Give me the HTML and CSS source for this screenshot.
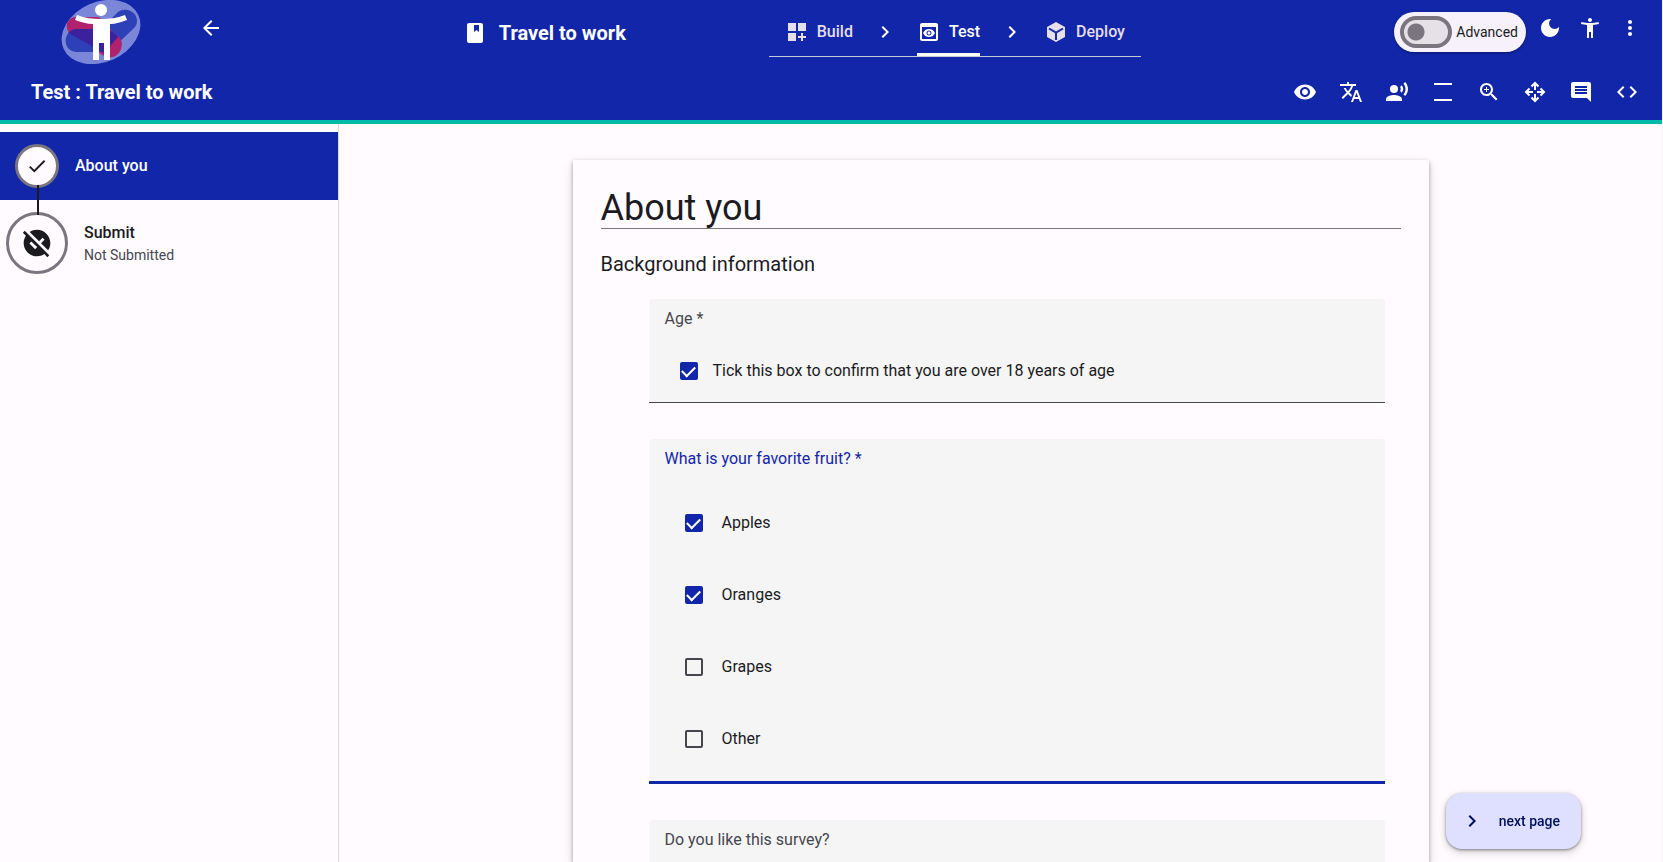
FILE: index.html
```html
<!DOCTYPE html>
<html lang="en">
<head>
<meta charset="utf-8">
<meta name="viewport" content="width=device-width, initial-scale=1">
<title>Test : Travel to work</title>
<link rel="stylesheet" href="styles.css">
</head>
<body>
<header class="header">
  <div class="topbar">
    <div class="brand">
      <svg class="logo" viewBox="0 0 84 66" aria-hidden="true">
        <ellipse cx="41" cy="32" rx="41" ry="30" transform="rotate(-24 41 32)" fill="#7a87d8"/>
        <path d="M58 12c7-5 19-1 19 9 0 4-2 6-5 9L51 50 40 30z" fill="#2d40b8"/>
        <path d="M17 17h22l16 17c7 3 8 10 6 15-3 8-10 10-17 7L14 36C3 31 5 17 17 17z" fill="#b0226e"/>
        <path d="M17 29h24c7 0 13 3 16 7L43 52H16C2 51 2 30 17 29z" fill="#2d40b8"/>
        <path d="M8 33c2-2 5-4 9-4h24c8 0 13 3 17 8L44 53 14 36z" fill="#3b229c"/>
        <circle cx="41" cy="10" r="6" fill="#fff"/>
        <path d="M17 15c8 3 16 4 24 4s16-1 24-4l2 5c-6 2-11 4-17 4v36h-6V43h-5v17h-6V24c-6 0-12-2-18-4z" fill="#fff"/>
      </svg>
      <button class="icon-button" type="button" aria-label="Back"><svg class="icon" viewBox="0 0 24 24"><path d="M20 11H7.83l5.59-5.59L12 4l-8 8 8 8 1.41-1.41L7.83 13H20v-2z"/></svg></button>
    </div>
    <div class="project">
      <svg class="icon" viewBox="0 0 24 24" aria-hidden="true"><path fill-rule="evenodd" d="M18 2H6c-1.100 0-2 .9-2 2v16c0 1.100.9 2 2 2h12c1.100 0 2-.9 2-2V4c0-1.100-.9-2-2-2zM11 4h5v7l-2.500-2L11 11z"/></svg>
      <span class="title">Travel to work</span>
    </div>
    <nav class="steps" aria-label="Stages">
      <a class="step" href="#build"><svg class="icon" viewBox="0 0 24 24"><path d="M3 3h8v8H3zM13 3h8v8h-8zM3 13h8v8H3zM18 13h-2v3h-3v2h3v3h2v-3h3v-2h-3z"/></svg>Build</a>
      <svg class="icon" viewBox="0 0 24 24" aria-hidden="true"><path d="M10 6L8.590 7.410 13.170 12l-4.580 4.590L10 18l6-6z"/></svg>
      <a class="step step-active" href="#test" aria-current="page"><svg class="icon" viewBox="0 0 24 24"><path d="M19 3H5c-1.110 0-2 .9-2 2v14c0 1.100.89 2 2 2h14c1.100 0 2-.9 2-2V5c0-1.100-.89-2-2-2zm0 16H5V7h14v12zm-5.500-6c0 .83-.67 1.500-1.500 1.500s-1.500-.67-1.500-1.500.67-1.500 1.500-1.500 1.500.67 1.500 1.500zM12 9c-2.730 0-5.060 1.660-6 4 .94 2.340 3.270 4 6 4s5.060-1.660 6-4c-.94-2.340-3.270-4-6-4zm0 6.500c-1.380 0-2.500-1.120-2.500-2.500s1.120-2.500 2.500-2.500 2.500 1.120 2.500 2.500-1.120 2.500-2.500 2.500z"/></svg>Test</a>
      <svg class="icon" viewBox="0 0 24 24" aria-hidden="true"><path d="M10 6L8.590 7.410 13.170 12l-4.580 4.590L10 18l6-6z"/></svg>
      <a class="step" href="#deploy"><svg class="icon" viewBox="0 0 24 24"><path d="M12 2l9 5v10l-9 5-9-5V7z"/><path class="cut" d="M5 8.500l7 4 7-4M12 12.500V20"/></svg>Deploy</a>
    </nav>
    <div class="tools">
      <label class="advanced"><input class="switch" type="checkbox" role="switch">Advanced</label>
      <button class="icon-button" type="button" aria-label="Dark mode"><svg class="icon" viewBox="0 0 24 24"><path d="M12 3c-4.970 0-9 4.030-9 9s4.030 9 9 9 9-4.030 9-9c0-.46-.04-.92-.1-1.360-.98 1.370-2.580 2.260-4.400 2.260-2.980 0-5.400-2.420-5.400-5.400 0-1.810.89-3.420 2.260-4.400-.44-.06-.9-.1-1.360-.1z"/></svg></button>
      <button class="icon-button" type="button" aria-label="Accessibility"><svg class="icon" viewBox="0 0 24 24"><path d="M20.500 6c-2.610.7-5.670 1-8.500 1s-5.890-.3-8.500-1L3 8c1.860.5 4 .83 6 1v13h2v-6h2v6h2V9c2-.17 4.140-.5 6-1l-.5-2zM12 6c1.100 0 2-.9 2-2s-.9-2-2-2-2 .9-2 2 .9 2 2 2z"/></svg></button>
      <button class="icon-button" type="button" aria-label="More"><svg class="icon" viewBox="0 0 24 24"><circle cx="12" cy="6" r="2"/><circle cx="12" cy="12" r="2"/><circle cx="12" cy="18" r="2"/></svg></button>
    </div>
  </div>
  <div class="subbar">
    <span class="title">Test : Travel to work</span>
    <div class="actions">
      <button class="icon-button" type="button" aria-label="Visibility"><svg class="icon" viewBox="0 0 24 24"><path d="M12 4.500C7 4.500 2.730 7.610 1 12c1.730 4.390 6 7.500 11 7.500s9.270-3.110 11-7.500c-1.730-4.390-6-7.500-11-7.500zM12 17c-2.760 0-5-2.240-5-5s2.240-5 5-5 5 2.240 5 5-2.240 5-5 5zm0-8c-1.660 0-3 1.340-3 3s1.340 3 3 3 3-1.340 3-3-1.340-3-3-3z"/></svg></button>
      <button class="icon-button" type="button" aria-label="Translate"><svg class="icon" viewBox="0 0 24 24"><path d="M12.870 15.070l-2.540-2.510.03-.03c1.740-1.940 2.980-4.170 3.710-6.530H17V4h-7V2H8v2H1v1.990h11.170C11.500 7.920 10.440 9.750 9 11.350 8.070 10.320 7.300 9.190 6.690 8h-2c.73 1.630 1.730 3.170 2.980 4.560l-5.090 5.020L4 19l5-5 3.110 3.110.76-2.040zM18.500 10h-2L12 22h2l1.120-3h4.750L21 22h2l-4.500-12zm-2.620 7l1.620-4.330L19.120 17h-3.240z"/></svg></button>
      <button class="icon-button" type="button" aria-label="Read aloud"><svg class="icon" viewBox="0 0 24 24"><circle cx="9" cy="9" r="4"/><path d="M9 15c-2.670 0-8 1.340-8 4v2h16v-2c0-2.660-5.330-4-8-4zm7.760-9.640l-1.680 1.690c.84 1.180.84 2.710 0 3.890l1.680 1.690c2.020-2.020 2.020-5.070 0-7.270zM20.070 2l-1.630 1.630c2.770 3.020 2.770 7.560 0 10.740L20.070 16c3.900-3.890 3.910-9.950 0-14z"/></svg></button>
      <button class="icon-button" type="button" aria-label="Line spacing"><svg class="icon" viewBox="0 0 24 24"><path d="M3 3h18v2H3zM3 19h18v2H3z"/></svg></button>
      <button class="icon-button" type="button" aria-label="Zoom in"><svg class="icon" viewBox="0 0 24 24"><path d="M15.500 14h-.79l-.28-.27C15.410 12.590 16 11.110 16 9.500 16 5.910 13.090 3 9.500 3S3 5.910 3 9.500 5.910 16 9.500 16c1.610 0 3.090-.59 4.230-1.570l.27.28v.79l5 4.990L20.490 19l-4.990-5zm-6 0C7.010 14 5 11.990 5 9.500S7.010 5 9.500 5 14 7.010 14 9.500 11.990 14 9.500 14z"/><path d="M12 10h-2v2H9v-2H7V9h2V7h1v2h2z"/></svg></button>
      <button class="icon-button" type="button" aria-label="Move"><svg class="icon icon-line" viewBox="0 0 24 24"><path d="M12 10V4M8.500 6.500L12 3l3.500 3.500M12 14v6M8.500 17.500L12 21l3.500-3.500M10 12H4M6.500 8.500L3 12l3.500 3.500M14 12h6M17.500 8.500L21 12l-3.500 3.500"/></svg></button>
      <button class="icon-button" type="button" aria-label="Comments"><svg class="icon" viewBox="0 0 24 24"><path d="M21.990 4c0-1.100-.89-2-1.990-2H4c-1.100 0-2 .9-2 2v12c0 1.100.9 2 2 2h14l4 4-.01-18zM18 14H6v-2h12v2zm0-3H6V9h12v2zm0-3H6V6h12v2z"/></svg></button>
      <button class="icon-button" type="button" aria-label="Code"><svg class="icon" viewBox="0 0 24 24"><path d="M9.400 16.600L4.800 12l4.600-4.600L8 6l-6 6 6 6 1.400-1.400zm5.200 0l4.600-4.600-4.600-4.600L16 6l6 6-6 6-1.400-1.400z"/></svg></button>
    </div>
  </div>
</header>
<div class="layout">
  <nav class="sidebar" aria-label="Pages">
    <a class="page page-current" href="#about" aria-current="page">
      <span class="badge"><svg class="icon" viewBox="0 0 24 24"><path d="M9 16.170L4.830 12l-1.420 1.410L9 19 21 7l-1.410-1.410z"/></svg></span>
      <span class="page-name">About you</span>
    </a>
    <a class="page page-submit" href="#submit">
      <span class="badge badge-large"><svg class="icon icon-large" viewBox="0 0 24 24"><path d="M21.190 21.190L2.810 2.810 1.390 4.220l2.270 2.270C2.610 8.070 2 9.960 2 12c0 5.520 4.480 10 10 10 2.040 0 3.930-.61 5.510-1.660l2.270 2.270 1.410-1.420zM10.590 16.600l-4.240-4.240 1.410-1.410 2.830 2.830.18-.18 1.410 1.410-1.590 1.590zM13.590 10.760l-7.100-7.100C8.070 2.610 9.960 2 12 2c5.520 0 10 4.480 10 10 0 2.040-.61 3.930-1.660 5.510l-5.340-5.340 2.650-2.650-1.410-1.410-2.650 2.650z"/></svg></span>
      <span class="page-text"><span class="page-name">Submit</span><span class="page-note">Not Submitted</span></span>
    </a>
  </nav>
  <main class="main">
    <form class="card">
      <h1 class="heading">About you</h1>
      <h2 class="subheading">Background information</h2>
      <fieldset class="field field-single">
        <legend class="legend">Age *</legend>
        <label class="option"><input class="check" type="checkbox" checked>Tick this box to confirm that you are over 18 years of age</label>
      </fieldset>
      <fieldset class="field field-active">
        <legend class="legend">What is your favorite fruit? *</legend>
        <label class="option"><input class="check" type="checkbox" checked>Apples</label>
        <label class="option"><input class="check" type="checkbox" checked>Oranges</label>
        <label class="option"><input class="check" type="checkbox">Grapes</label>
        <label class="option"><input class="check" type="checkbox">Other</label>
      </fieldset>
      <fieldset class="field">
        <legend class="legend">Do you like this survey?</legend>
      </fieldset>
    </form>
  </main>
</div>
<button class="next" type="button"><svg class="icon" viewBox="0 0 24 24"><path d="M10 6L8.590 7.410 13.170 12l-4.580 4.590L10 18l6-6z"/></svg>next page</button>
</body>
</html>
```
FILE: styles.css
```css
* {
  box-sizing: border-box;
}

body {
  display: flex;
  flex-direction: column;
  height: 100vh;
  margin: 0;
  overflow: hidden;
  border-right: 1px solid #f3f1f5;
  background: #fffbff;
  color: #1b1b1f;
  font-family: Roboto, "Liberation Sans", sans-serif;
  font-size: 16px;
  line-height: 24px;
}

a {
  color: inherit;
  text-decoration: none;
}

button {
  border: 0;
  background: none;
  color: inherit;
  font: inherit;
  cursor: pointer;
}

.icon {
  display: block;
  flex: none;
  width: 24px;
  height: 24px;
  fill: currentColor;
}

.icon-line {
  fill: none;
  stroke: currentColor;
  stroke-width: 2;
}

.icon-button {
  padding: 0;
}

.header {
  flex: none;
  border-bottom: 4px solid #00bba7;
  background: #1226aa;
  color: #fff;
}

.topbar {
  display: grid;
  grid-template-columns: 27% 320px auto 1fr;
  height: 64px;
}

.brand {
  display: flex;
  align-items: flex-start;
  gap: 55px;
  padding-left: 60px;
}

.brand .icon-button {
  margin-top: 16px;
}

.logo {
  width: 84px;
  height: 66px;
}

.project {
  display: flex;
  align-items: center;
  gap: 12px;
  padding-left: 14px;
}

.title {
  font-size: 20px;
  font-weight: 700;
}

.steps {
  display: flex;
  align-items: center;
  gap: 20px;
  height: 57px;
  padding: 7px 16px 0;
  border-bottom: 1px solid #c5c9d0;
}

.step {
  display: flex;
  align-items: center;
  gap: 8px;
  height: 49px;
  color: #e5deeb;
  font-weight: 500;
}

.step-active {
  box-shadow: inset 0 -3px #fff;
  color: #fff;
}

.cut {
  fill: none;
  stroke: #1226aa;
  stroke-width: 2;
}

.tools {
  display: flex;
  align-items: flex-start;
  justify-content: flex-end;
  gap: 16px;
  padding: 12px 20px 0 0;
}

.tools .icon-button {
  margin-top: 4px;
}

.advanced {
  display: flex;
  align-items: center;
  gap: 4px;
  height: 40px;
  margin-right: -4px;
  padding: 0 8px 0 6px;
  border-radius: 20px;
  background: #f6f1fa;
  box-shadow: 0 1px 3px rgb(0 0 0 / 40%);
  color: #1b1b1f;
  font-size: 14px;
}

.switch {
  appearance: none;
  width: 52px;
  height: 32px;
  margin: 0;
  border: 4px solid #7a757f;
  border-radius: 16px;
  background: radial-gradient(circle at 12px 12px, #7a757f 8px, #e5e1e6 9px);
}

.subbar {
  display: flex;
  align-items: center;
  justify-content: space-between;
  height: 56px;
  padding: 0 23px 0 31px;
}

.actions {
  display: flex;
  gap: 22px;
}

.layout {
  display: flex;
  flex: 1;
  min-height: 0;
}

.sidebar {
  flex: none;
  width: 339px;
  padding-top: 8px;
  border-right: 1px solid #dddbdf;
}

.page {
  display: flex;
  align-items: center;
}

.page-current {
  gap: 16px;
  height: 68px;
  padding-left: 15px;
  background: #1226aa;
  color: #fff;
}

.page-submit {
  gap: 16px;
  height: 86px;
  padding-left: 6px;
}

.badge {
  display: flex;
  align-items: center;
  justify-content: center;
  position: relative;
  width: 44px;
  height: 44px;
  border: 3px solid #7a757f;
  border-radius: 50%;
  background: #fffbff;
  color: #1b1b1f;
}

.badge .icon {
  width: 22px;
  height: 22px;
}

.badge .icon-large {
  width: 32px;
  height: 32px;
}

.badge-large {
  width: 62px;
  height: 62px;
}

.badge-large::before {
  content: "";
  position: absolute;
  bottom: 56px;
  left: 28px;
  width: 2px;
  height: 30px;
  background: #1b1b1f;
}

.page-text {
  display: flex;
  flex-direction: column;
}

.page-name {
  font-weight: 500;
}

.page-note {
  color: #47464f;
  font-size: 14px;
  line-height: 20px;
}

.main {
  display: flex;
  flex: 1;
  justify-content: center;
  padding: 36px 32px 0;
}

.card {
  width: 100%;
  max-width: 856px;
  padding: 28px;
  box-shadow: 0 2px 4px rgb(0 0 0 / 35%), 0 4px 12px rgb(0 0 0 / 12%);
}

.heading {
  margin: 0;
  border-bottom: 1px solid #7a757f;
  font-size: 36px;
  font-weight: 400;
  line-height: 40px;
}

.subheading {
  margin: 23px 0;
  font-size: 20px;
  font-weight: 400;
  line-height: 24px;
}

.field {
  display: flow-root;
  min-width: 0;
  min-height: 104px;
  margin: 0 16px 36px 48px;
  padding: 8px 16px 11px;
  border: 0;
  border-bottom: 1px solid #47464f;
  border-radius: 4px 4px 0 0;
  background: #f5f5f5;
}

.field-active {
  padding-bottom: 6px;
  border-bottom: 3px solid #1226aa;
}

.legend {
  float: left;
  width: 100%;
  padding: 0;
  color: #47464f;
}

.field-active .legend {
  margin-bottom: 16px;
  color: #1226aa;
}

.option {
  display: flex;
  align-items: center;
  clear: both;
  gap: 19px;
  height: 72px;
  padding-left: 20px;
}

.field-single .option {
  gap: 15px;
  height: 40px;
  padding-left: 15px;
}

.field-single .legend {
  margin-bottom: 20px;
}

.check {
  display: grid;
  appearance: none;
  flex: none;
  width: 18px;
  height: 18px;
  margin: 0;
  border: 2px solid #47464f;
  border-radius: 2px;
}

.check:checked {
  border-color: #1226aa;
  background: #1226aa;
}

.check:checked::before {
  content: "";
  align-self: center;
  justify-self: center;
  width: 11px;
  height: 6px;
  margin-top: -3px;
  border: solid #fff;
  border-width: 0 0 2px 2px;
  transform: rotate(-45deg);
}

.next {
  display: flex;
  align-items: center;
  gap: 15px;
  position: fixed;
  right: 82px;
  bottom: 13px;
  height: 56px;
  padding: 0 21px 0 14px;
  border-radius: 16px;
  background: #dfe0ff;
  box-shadow: 0 1px 3px rgb(0 0 0 / 40%), 0 3px 8px rgb(0 0 0 / 20%);
  color: #000f5d;
  font-size: 14px;
  font-weight: 500;
}
```
